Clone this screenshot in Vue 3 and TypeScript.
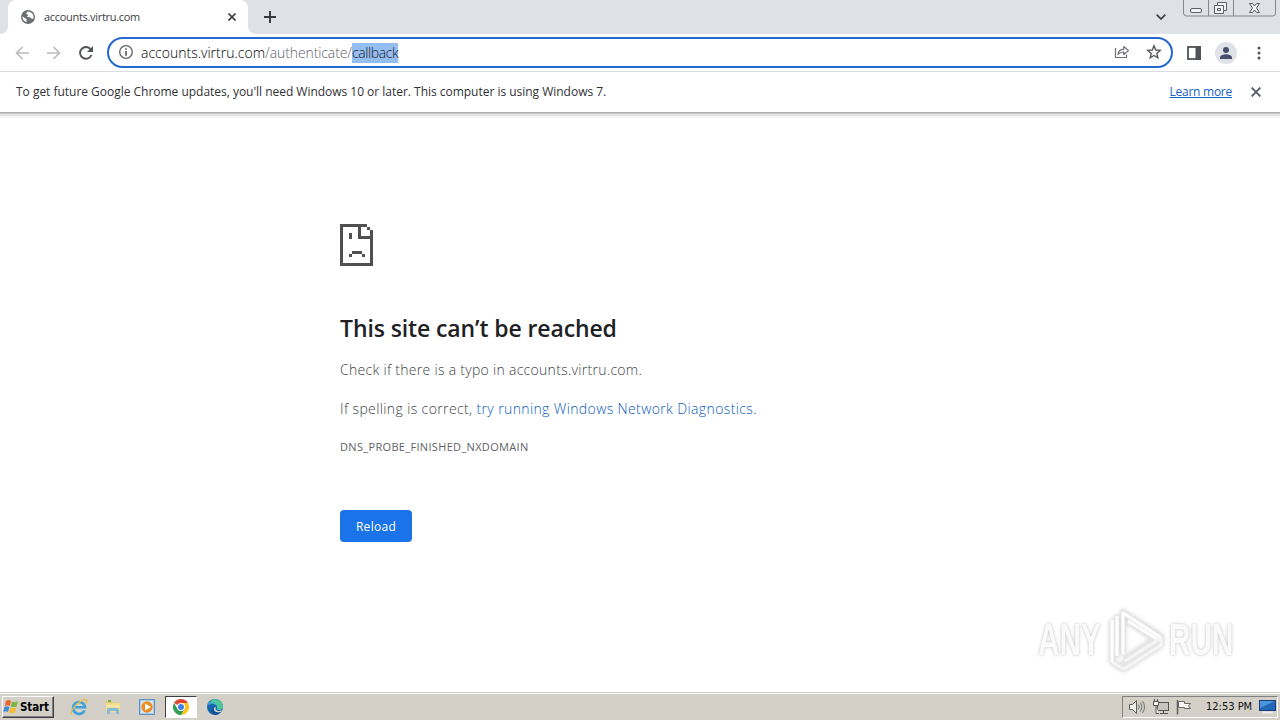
<script setup lang="ts">
const host = 'accounts.virtru.com'
const sadPixels: number[][] = [
  [0, 0, 9, 1], [0, 1, 1, 13], [1, 13, 10, 1], [10, 2, 1, 11], [9, 1, 1, 1],
  [6, 1, 1, 4], [7, 4, 3, 1], [3, 3, 1, 2], [4, 9, 3.4, 1], [3, 10, 1, 1], [7.3, 10, 1, 1],
]
</script>

<template>
  <div class="screen">
    <header class="tabstrip">
      <div class="tab">
        <svg class="globe" width="14" height="14" viewBox="0 0 14 14">
          <circle cx="7" cy="7" r="7" fill="#6b6e72" />
          <path d="M1.4 6.2 4 8.3c1 .2 1.7.7 1.5 1.7v2.2C3 11.5 1.400 9.300 1.400 6.800zM7.200 1.400C6.200 2.300 5.300 2.500 5.200 3.700c.2 1 1.500.4 1.800 1.500.2 1.100-1.300 1-1 1.900l2.700.2c1.200.2 1.100 1.500 2.300 1.500l1.500-.4c.7-3.500-1.700-6.600-5.300-7z" fill="#fff" />
        </svg>
        <span class="tab-title">{{ host }}</span>
        <svg class="tab-close" width="8" height="8" viewBox="0 0 8 8"><path d="M.5.5l7 7M7.500.5l-7 7" stroke="#3c4043" stroke-width="1.600" /></svg>
        <svg class="curve left" width="8" height="8"><path d="M8 0v8H0a8 8 0 0 0 8-8z" fill="#fff" /></svg>
        <svg class="curve right" width="8" height="8"><path d="M0 0v8h8a8 8 0 0 1-8-8z" fill="#fff" /></svg>
      </div>
      <svg class="plus" width="12" height="12" viewBox="0 0 12 12"><path d="M6 0v12M0 6h12" stroke="#35383c" stroke-width="1.900" /></svg>
      <span class="grow"></span>
      <svg class="chevron" width="10" height="6" viewBox="0 0 10 6"><path d="M.7.7 5 5 9.300.7" fill="none" stroke="#3c4043" stroke-width="1.700" /></svg>
      <svg class="winbtns" width="94" height="18" viewBox="0 0 94 18">
        <path d="M.5 0v13a3 3 0 0 0 3 3h86a3 3 0 0 0 3-3V0M25.500 0v16M50.500 0v16" fill="none" stroke="#85888e" />
        <g fill="#f3f4f6" stroke="#5d6067">
          <rect x="7.500" y="8.500" width="11" height="4" rx="1.500" />
          <path d="M34.500 2.500h9v8h-3v3h-9v-8h3z" />
          <path d="M34.500 5.500h6v5M34.500 8.500h3v2h-3z" />
          <path d="M66.500 3.500h3l2 2.500 2-2.500h3l-3 4.500 3 4.500h-3l-2-2.500-2 2.500h-3l3-4.500z" />
        </g>
      </svg>
    </header>

    <nav class="toolbar">
      <svg class="back" width="14" height="14" viewBox="0 0 14 14"><path d="M14 7H1.500M7.500 1 1.500 7l6 6" fill="none" stroke="#b9bbbe" stroke-width="1.600" /></svg>
      <svg class="fwd" width="14" height="14" viewBox="0 0 14 14"><path d="M0 7h12.500M6.500 1l6 6-6 6" fill="none" stroke="#b9bbbe" stroke-width="1.600" /></svg>
      <svg class="refresh" width="14" height="14" viewBox="0 0 14 14"><path d="M12.500 9A5.900 5.900 0 1 1 11.500 3" fill="none" stroke="#505357" stroke-width="1.900" /><path d="M14 0v6H8z" fill="#505357" /></svg>
      <div class="omnibox">
        <svg class="info" width="14" height="14" viewBox="0 0 14 14"><circle cx="7" cy="7" r="6.300" fill="none" stroke="#5f6368" stroke-width="1.300" /><path d="M7 3.200v1.600M7 6v4.800" stroke="#5f6368" stroke-width="1.700" /></svg>
        <span class="url"><span class="u-host">{{ host }}</span><span class="u-path">/authenticate/</span><span class="u-sel">callback</span></span>
        <span class="grow"></span>
        <svg class="share" width="16" height="14" viewBox="0 0 16 14"><path d="M1.500 3v9.500h11V9.500" fill="none" stroke="#6b6e73" stroke-width="1.200" /><path d="M4 9.300c.5-3.300 2.300-5 5.800-5.200V1.500L14.500 5.600 9.800 9.500V7C7.300 7 5.500 7.600 4 9.300z" fill="none" stroke="#6b6e73" stroke-width="1.200" stroke-linejoin="round" /></svg>
        <svg class="star" width="16" height="16" viewBox="0 0 16 16"><path d="M8 1.800l1.700 4.200 4.500.4-3.400 3 1 4.400L8 11.500l-3.800 2.300 1-4.400-3.400-3 4.500-.4z" fill="none" stroke="#55585d" stroke-width="1.400" /></svg>
      </div>
      <svg class="panel" width="14" height="14" viewBox="0 0 14 14"><rect x="1" y="1" width="12" height="12" fill="#fff" stroke="#505357" stroke-width="1.800" /><rect x="8.500" width="5.500" height="14" fill="#505357" /></svg>
      <svg class="avatar" width="22" height="22" viewBox="0 0 22 22"><circle cx="11" cy="11" r="11" fill="#dfe2e7" /><circle cx="11" cy="8" r="3" fill="#47506b" /><path d="M5 17v-1.500C5 13.200 9 12.300 11 12.300s6 .9 6 3.200V17z" fill="#47506b" /></svg>
      <svg class="dots" width="4" height="14" viewBox="0 0 4 14"><circle cx="2" cy="2" r="1.500" /><circle cx="2" cy="7" r="1.500" /><circle cx="2" cy="12" r="1.500" /></svg>
    </nav>

    <section class="infobar">
      <span class="msg">To get future Google Chrome updates, you'll need Windows 10 or later. This computer is using Windows 7.</span>
      <span class="grow"></span>
      <a class="learn">Learn more</a>
      <svg class="info-close" width="10" height="10" viewBox="0 0 10 10"><path d="M.6.6l8.800 8.800M9.400.6.6 9.400" stroke="#55585c" stroke-width="1.800" /></svg>
    </section>

    <main class="page">
      <svg class="sad" width="33" height="42" viewBox="0 0 11 14" shape-rendering="crispEdges">
        <rect v-for="(p, i) in sadPixels" :key="i" :x="p[0]" :y="p[1]" :width="p[2]" :height="p[3]" fill="#505050" />
      </svg>
      <h1>This site can’t be reached</h1>
      <p class="l1">Check if there is a typo in {{ host }}.</p>
      <p class="l2">If spelling is correct, <a>try running Windows Network Diagnostics</a>.</p>
      <p class="code">DNS_PROBE_FINISHED_NXDOMAIN</p>
      <button class="reload">Reload</button>
      <div class="mark">
        <span class="any">ANY</span>
        <svg width="60" height="64" viewBox="0 0 60 64">
          <g fill="none" stroke-linejoin="round">
            <path d="M5 12v42l8 5 4 2 37-24v-9L16 4v40M10 7v42M16 4l36 24M20 13l28 18-30 20M13 59l40-27" stroke="#e6e6e6" stroke-width="5" />
            <path d="M5 54V12M10 8v40M16 46V5l37 24M21 13l29 18" stroke="#fff" stroke-width="3" />
            <path d="M5 54l8 5 4 2 37-24v-7L18 53" stroke="#f5f5f5" stroke-width="3" />
          </g>
        </svg>
        <span class="run">RUN</span>
      </div>
    </main>

    <footer class="taskbar">
      <div class="start">
        <svg width="17" height="16" viewBox="0 0 17 16">
          <path d="M3 2c2-1.500 3.500-1 5 0L6.700 7C5 6 3.600 6 1.800 7z" fill="#e8662b" />
          <path d="M9 2.500c2 1 4 1 6-.2L13.600 7.500c-2 1-4 1-5.800 0z" fill="#7fb43c" />
          <path d="M1.500 8C3.200 7 4.700 7 6.400 8L5 13c-1.600-1-3-1-4.800 0z" fill="#4089d3" />
          <path d="M7.500 8.500c1.800 1 3.800 1 5.800 0L12 13.500c-2 1-4 1-6 0z" fill="#f5bd32" />
        </svg>
        <span>Start</span>
      </div>
      <svg class="ie" width="18" height="18" viewBox="0 0 18 18">
        <path d="M14.500 12.500A6 6 0 1 1 15 9.200H5" fill="none" stroke="#3ba3dc" stroke-width="2.600" />
        <path d="M2 16.500C-1 14 7 3 15.500 1.500c2.200-.2 1.500 2.500.5 4" fill="none" stroke="#e6bd45" stroke-width="1.300" />
      </svg>
      <svg class="folder" width="18" height="18" viewBox="0 0 18 18">
        <path d="M2 3h5l1 1.500h7V14H2z" fill="#e8c765" /><path d="M4 2h3v2H4z" fill="#6fb354" />
        <path d="M2 5h14v9H2z" fill="#f3dc8c" /><path d="M3 8h12" stroke="#fff4cc" />
        <path d="M3 16v-4q0-2 2-2h8q2 0 2 2v4h-3v-3H6v3z" fill="#7fbbdc" />
      </svg>
      <svg class="wmp" width="16" height="16" viewBox="0 0 16 16"><rect x=".5" y=".5" width="15" height="15" fill="#a9cbe8" stroke="#5d93c4" /><rect x="2" y="2" width="12" height="12" fill="#d7e8f5" /><circle cx="8" cy="8" r="5.700" fill="#ef8a1f" /><path d="M6 4.500v7L12 8z" fill="#fff" /></svg>
      <div class="active">
        <svg width="16" height="16" viewBox="0 0 16 16">
          <path d="M8 8 1.070 4A8 8 0 0 1 14.930 4z" fill="#e0452f" />
          <path d="M8 4h6.930A8 8 0 0 1 8 16l3.500-6z" fill="#f8c51c" />
          <path d="M1.070 4 4.500 10 8 12l3.500-2L8 16A8 8 0 0 1 1.070 4z" fill="#2f9e4f" />
          <circle cx="8" cy="8" r="4" fill="#fff" /><circle cx="8" cy="8" r="3" fill="#3f7fe8" />
        </svg>
      </div>
      <svg class="edge" width="16" height="16" viewBox="0 0 16 16">
        <circle cx="8" cy="8" r="8" fill="#1767ae" />
        <path d="M.2 7A8 8 0 0 1 16 7.500c0 3-3 4-6 3-1-.6.500-1 .2-2.500C9.800 5 3.500 3.500.2 7z" fill="#38a5d6" />
        <path d="M8 0a8 8 0 0 1 8 7.500c0 3-3 4-5.500 3-.7-.6.200-1.200-.1-2.500C10 5 6 3 3 3.500 4 1.500 6 0 8 0z" fill="#4fc59a" />
        <path d="M6.300 8C5 10.500 7.500 14 12.500 13l1.700-.5C12 15 9 16 7 15.600 4 14.500 3 10 6.300 8z" fill="#114f91" />
        <path d="M9.300 7.200c-1.400 1.800-.8 4.300 2 4.800 1.700.2 3.300-.3 4-1l-1.200 2C10 14 6.300 12.500 7 9z" fill="#d4d0c8" />
      </svg>
      <span class="grow"></span>
      <div class="tray">
        <svg width="18" height="16" viewBox="0 0 18 16"><path d="M1.500 5.500h3l4-4v13l-4-4h-3z" fill="#f5f3ef" stroke="#5c5c5c" /><path d="M10.500 5.500q1.500 2.500 0 5M12.500 3.500q3 4.500 0 9M14.500 2q4 6 0 12" fill="none" stroke="#727272" /></svg>
        <svg width="16" height="16" viewBox="0 0 16 16"><rect x="4.500" y="3.500" width="11" height="8" fill="#c8c5c0" stroke="#555" /><path d="M7 14.500h8M10.500 12v2" stroke="#555" /><path d="M.5 2.500h5v4h-5zM1.500 0v2M4.500 0v2M3 7v7.500h3" fill="#f5f3ef" stroke="#555" /></svg>
        <svg width="16" height="16" viewBox="0 0 16 16"><path d="M1.500 1v14.500" stroke="#5c5c5c" stroke-width="1.500" /><path d="M2.500 2.500h6v2h6l-2 2.500 2 2.500h-6v-1h-6z" fill="#f8f6f3" stroke="#666" /></svg>
        <span class="clock">12:53 PM</span>
        <svg class="desk" width="17" height="14" viewBox="0 0 17 14"><rect x=".5" y=".5" width="16" height="10" fill="#2367b8" stroke="#1b3e7a" /><path d="M1 1h15L1 8z" fill="#4a94dc" /><path d="M3 12.500h11" stroke="#e8edf2" stroke-width="2" /></svg>
      </div>
    </footer>
  </div>
</template>

<style>
body { margin: 0; overflow: hidden; }
</style>

<style scoped>
* { box-sizing: border-box; }
.screen { width: 1280px; height: 720px; display: flex; flex-direction: column; background: #fff; font-family: "Open Sans", "Noto Sans", sans-serif; overflow: hidden; }
.screen svg { display: block; flex: none; }
.grow { flex: 1; }
span, a, p, h1 { white-space: pre; }
.tabstrip { height: 34px; flex: none; background: #dee1e6; display: flex; align-items: flex-start; }
.tab { position: relative; margin-left: 8px; width: 240px; height: 34px; background: #fff; border-radius: 8px 8px 0 0; display: flex; align-items: center; padding: 0 12px 0 13px; }
.tab-title { margin: 0 0 2px 9px; flex: 1; font-size: 11px; color: #3c4043; letter-spacing: -0.3px; }
.curve { position: absolute; bottom: 0; }
.left { left: -8px; }
.right { right: -8px; }
.plus { margin: 11px 0 0 16px; }
.chevron { margin: 14px 17px 0 0; }
.winbtns { margin-right: 3px; }
.toolbar { height: 38px; flex: none; border-bottom: 1px solid #dadce0; display: flex; align-items: center; padding-left: 15px; }
.fwd { margin-left: 18px; }
.refresh { margin-left: 18px; }
.omnibox { width: 1066px; height: 31px; margin: 0 0 1px 14px; border: 2px solid #2568d0; border-radius: 16px; display: flex; align-items: center; padding: 0 9px 0 10px; }
.url { margin: 1px 0 0 8px; font-size: 14px; line-height: 20px; color: #202124; display: flex; font-weight: 300; }
.u-host { color: #000; }
.u-path { color: #5f6368; letter-spacing: -0.1px; }
.u-sel { background: #94bdf2; letter-spacing: -0.4px; }
.share { margin-right: 16px; }
.panel { margin-left: 14px; }
.avatar { margin-left: 14px; }
.dots { margin-left: 20px; fill: #505357; }
.infobar { height: 40px; flex: none; display: flex; align-items: center; padding: 0 19px 0 16px; font-size: 12px; color: #303236; }
.msg { letter-spacing: -0.02px; margin-bottom: 1px; }
.learn { color: #1762c4; text-decoration: underline; margin: 0 19px 1px 0; letter-spacing: -0.25px; }
.page { position: relative; flex: 1; min-height: 0; background: linear-gradient(#b0b0b0 0 1px, #c6c6c6 1px 2px, #e4e4e4 2px 4px, #f5f5f5 4px 6px, #fff 6px); padding: 112px 0 0 340px; color: #5f6368; }
h1 { margin: 44px 0 0; height: 36px; line-height: 36px; font-size: 23px; font-weight: 600; color: #202124; letter-spacing: -0.11px; }
p { margin: 0; line-height: 24px; }
.l1 { margin-top: 12px; font-size: 14px; font-weight: 300; color: #404347; letter-spacing: 0.29px; }
.l2 { margin-top: 15px; font-size: 14px; font-weight: 300; color: #404347; letter-spacing: 0.38px; }
.l2 a { color: #0b5cc0; }
.code { margin-top: 14px; font-size: 11px; letter-spacing: 0.33px; }
.reload { display: block; margin-top: 51px; width: 72px; height: 32px; border: 0; border-radius: 4px; background: #1a73e8; color: #fff; font: 12px "Open Sans", sans-serif; letter-spacing: 0.3px; padding: 0; }
.mark { position: absolute; left: 1038px; top: 496px; display: flex; align-items: center; font: bold 45px/64px "Liberation Sans", sans-serif; color: #fafafa; text-shadow: 0 0 4px #c4c4c4, 0 0 1px #ddd; }
.mark span { display: block; width: 67px; transform: scaleX(.66); transform-origin: 0 50%; }
.mark svg { margin-left: 2px; margin-right: 2px; filter: drop-shadow(0 0 2px #d0d0d0); }
.taskbar { height: 28px; flex: none; background: #d4d0c8; border-top: 1px solid #d4d0c8; box-shadow: inset 0 1px #fff; display: flex; align-items: center; padding: 0 2px 0 2px; }
.start { width: 52px; height: 22px; border: 1px solid; border-color: #fff #404040 #404040 #fff; box-shadow: inset -1px -1px #808080; display: flex; align-items: center; font: bold 11.500px "DejaVu Sans Condensed", sans-serif; color: #000; }
.start span { letter-spacing: -0.1px; }
.ie { margin-left: 16px; }
.folder { margin-left: 16px; }
.wmp { margin-left: 17px; }
.active { margin-left: 10px; width: 32px; height: 22px; background: #fff; border: 1px solid; border-color: #404040 #fff #fff #404040; display: flex; align-items: center; justify-content: center; }
.edge { margin-left: 10px; }
.tray { width: 156px; height: 22px; border: 1px solid; border-color: #808080 #fff #fff #808080; display: flex; align-items: center; gap: 7px; padding-left: 5px; }
.clock { width: 46px; margin-left: 7px; font: 11px "DejaVu Sans Condensed", sans-serif; color: #111; }
</style>
